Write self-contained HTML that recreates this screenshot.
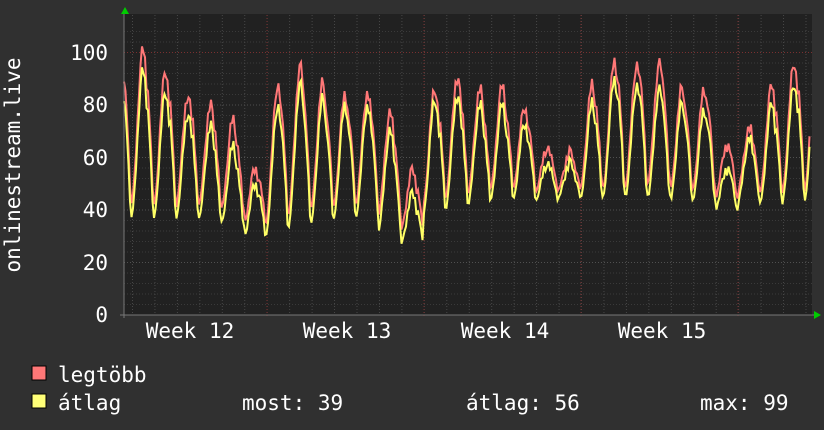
<!DOCTYPE html>
<html><head><meta charset="utf-8"><style>
body{margin:0;background:#303030;width:824px;height:430px;overflow:hidden;font-family:"DejaVu Sans Mono","Liberation Mono",monospace;color:#fff}
svg{position:absolute;left:0;top:0}
</style></head><body>
<svg width="824" height="430" xmlns="http://www.w3.org/2000/svg" font-family="DejaVu Sans Mono, Liberation Mono, monospace" font-size="21" fill="#fff">
<rect x="124" y="14" width="688" height="301" fill="#212121"/>
<g id="grid" stroke-width="1" stroke-dasharray="1,2"></g>
<g id="data" fill="none" stroke-width="2"></g>
<line x1="124" y1="12" x2="124" y2="318" stroke="#777"/>
<line x1="120" y1="315" x2="814" y2="315" stroke="#777"/>
<polygon points="121,14 125,7 129,14" fill="#0c0"/>
<polygon points="814,311 821,315 814,319" fill="#0c0"/>
<g text-anchor="end">
<text x="108" y="60">100</text><text x="108" y="112">80</text><text x="108" y="165">60</text>
<text x="108" y="217">40</text><text x="108" y="270">20</text><text x="108" y="322">0</text>
</g>
<text transform="translate(20,165) rotate(-90)" text-anchor="middle">onlinestream.live</text>
<g text-anchor="middle">
<text x="190" y="338">Week 12</text><text x="347" y="338">Week 13</text>
<text x="505" y="338">Week 14</text><text x="662" y="338">Week 15</text>
</g>
<rect x="32" y="366" width="14" height="14" fill="#f77" stroke="#000" stroke-width="1"/>
<rect x="32" y="394" width="14" height="14" fill="#ff7" stroke="#000" stroke-width="1"/>
<text x="58" y="382">legtöbb</text>
<text x="58" y="410">átlag</text>
<text x="242" y="410">most: 39</text>
<text x="466" y="410">átlag: 56</text>
<text x="700" y="410">max: 99</text>
</svg>
<script>
var g=document.getElementById('grid'),d=document.getElementById('data'),ns='http://www.w3.org/2000/svg';
function ln(x1,y1,x2,y2,c){var l=document.createElementNS(ns,'line');l.setAttribute('x1',x1);l.setAttribute('y1',y1);l.setAttribute('x2',x2);l.setAttribute('y2',y2);l.setAttribute('stroke',c);g.appendChild(l);}
for(var v=4;v<=110;v+=4){var y=315-v*2.625;if(y<15)break;ln(124,y,812,y,'#3a3a3a');}
for(var v=20;v<=100;v+=20){var y=315-v*2.625;ln(124,y,812,y,v==100?'#7a3030':'#505050');}
for(var x=132.5;x<812;x+=22.45){ln(x,15,x,315,'#484848');}
[267,424,581,738].forEach(function(x){ln(x,15,x,318,'#7a3030');});
var peaks=[[101,93],[93,85],[84,77],[80,72],[74,64],[56,50],[88,80],[95,88],[88,82],[84,80],[85,80],[77,70],[55,46],[86,82],[91,84],[86,80],[87,80],[79,73],[64,58],[62,58],[87,80],[97,90],[96,88],[96,86],[86,80],[86,78],[65,56],[71,67],[87,80],[96,88],[103,99]];
var tr=[[36,31],[36,32],[38,33],[37,32],[36,31],[32,27],[30,26],[33,28],[36,30],[37,32],[38,33],[34,28],[30,25],[38,34],[40,36],[42,38],[44,40],[45,41],[45,42],[46,43],[44,40],[42,40],[44,40],[45,40],[43,39],[44,40],[42,38],[44,40],[42,38],[42,39],[42,38]];
function path(k){var pts=[];for(var x=124;x<=810;x+=1.5){var t=(x-143)/22.45;var i=Math.round(t);var f=t-i;var ii=Math.max(0,Math.min(peaks.length-1,i));var p=peaks[ii][k];var q=tr[ii][k];var s=Math.pow(Math.cos(f*Math.PI)*0.5+0.5,3.5);var n=Math.sin(x*1.7)*2+Math.sin(x*0.63)*1.5;var v=q+(p-q)*s+n*s;if(f>0.2&&f<0.4)v+=(p-q)*0.12;pts.push(x.toFixed(1)+','+(315-v*2.625).toFixed(1));}
var pl=document.createElementNS(ns,'polyline');pl.setAttribute('points',pts.join(' '));pl.setAttribute('stroke',k?'#ffff66':'#ff7777');d.appendChild(pl);}
path(0);path(1);
</script>
</body></html>
